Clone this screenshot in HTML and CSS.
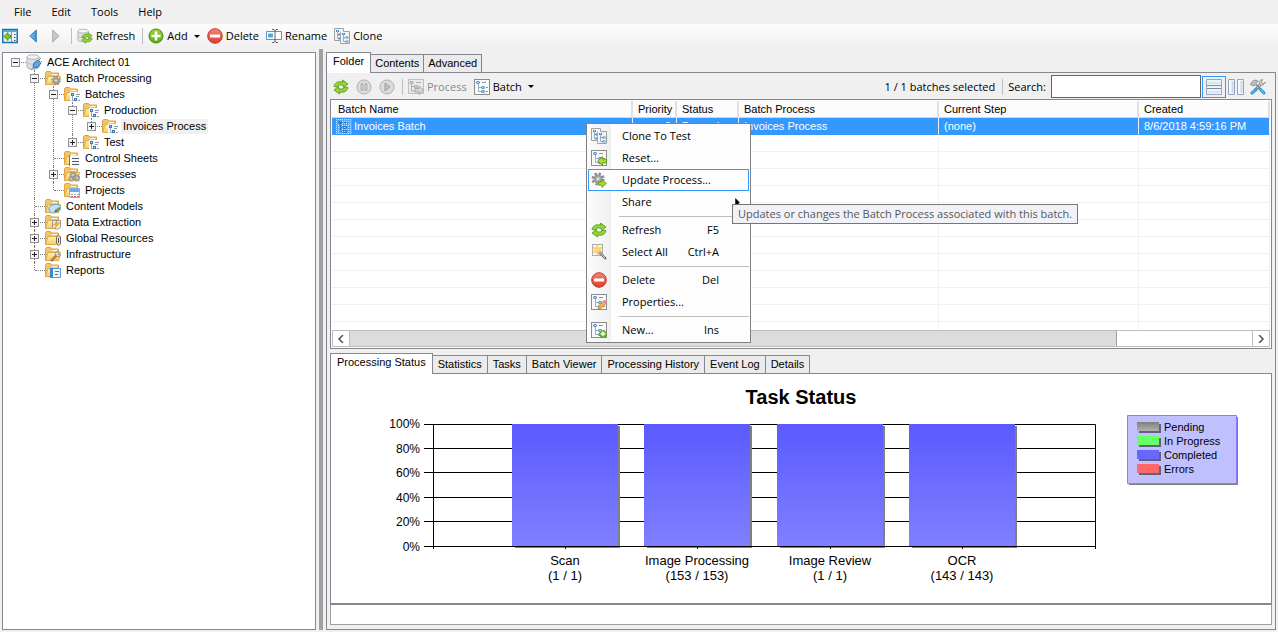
FILE: index.html
```html
<!DOCTYPE html>
<html lang="en">
<head>
<meta charset="utf-8">
<title>ACE Architect</title>
<link rel="stylesheet" href="styles.css">
</head>
<body>
<svg class="defs" aria-hidden="true">
  <defs>
    <linearGradient id="gFolder" x1="0" y1="0" x2="0" y2="1"><stop offset="0" stop-color="#fff0b0"/><stop offset="1" stop-color="#f8cc60"/></linearGradient>
    <linearGradient id="gBlue" x1="0" y1="0" x2="1" y2="0"><stop offset="0" stop-color="#8cc8f4"/><stop offset="1" stop-color="#3c8cd0"/></linearGradient>
    <linearGradient id="gRed" x1="0" y1="0" x2="0" y2="1"><stop offset="0" stop-color="#f08878"/><stop offset="1" stop-color="#dc3c2c"/></linearGradient>
    <linearGradient id="gGreen" x1="0" y1="0" x2="0" y2="1"><stop offset="0" stop-color="#9cd838"/><stop offset="1" stop-color="#5aa80c"/></linearGradient>
    <linearGradient id="gBar" x1="0" y1="0" x2="0" y2="1"><stop offset="0" stop-color="#5a5aff"/><stop offset="1" stop-color="#8080ff"/></linearGradient>
    <linearGradient id="gPend" x1="0" y1="0" x2="0" y2="1"><stop offset="0" stop-color="#808080"/><stop offset="1" stop-color="#b0b0b0"/></linearGradient>
  </defs>
  <symbol id="nodes" viewBox="0 0 16 16">
    <path d="M4.500 5v8M4.500 8.500h3M4.500 12.500h3" fill="none" stroke="#9cb0c4"/>
    <path d="M8 3.500h4M12 8.500h2M12 12.500h2" stroke="#8a949c"/>
    <g fill="#a8d8f8" stroke="#3c78ac"><rect x="2.500" y="2.500" width="3" height="2" rx="1"/><rect x="7.500" y="7.500" width="3" height="2" rx="1"/><rect x="7.500" y="11.500" width="3" height="2" rx="1"/></g>
  </symbol>
  <symbol id="batch" viewBox="0 0 16 16">
    <rect x=".5" y=".5" width="15" height="15" fill="#fafafa" stroke="#8c8c8c"/>
    <use href="#nodes" width="16" height="16"/>
  </symbol>
  <symbol id="clone" viewBox="0 0 16 16">
    <path d="M.5.500h9v3h6v12h-9v-3h-6z" fill="#f4f4f4" stroke="#a0a0a0"/>
    <path d="M6.500 3.500v10" stroke="#b4b4b4"/>
    <path d="M3.500 3v7.500h2M3.500 6.500h2M9.500 6v7.500h3M9.500 9.500h3" fill="none" stroke="#8cb0d0"/>
    <g fill="#4c8cc4"><path d="M2 2h3v2H2zM4.500 5.500h2v2h-2zM4.500 9.500h2v2h-2zM8 5h3v2H8zM11.500 8.500h3v2h-3zM11.500 12.500h3v2h-3z"/></g>
    <path d="M3 3h1M9 6h1M12.500 9.500h1M12.500 13.500h1" stroke="#d0ecff"/>
  </symbol>
  <symbol id="folder" viewBox="0 0 16 16">
    <path d="M.5 14.500V2.500l1-1h4l1.500 1.500h6.500v11.500z" fill="#f0c468" stroke="#dca444"/>
    <path d="M7 4.500h5" stroke="#fff6dc"/>
    <path d="M.5 14.500L3 6.500h12.500L13.500 14.500z" fill="url(#gFolder)" stroke="#e0ac48"/>
  </symbol>
  <symbol id="gear" viewBox="0 0 16 16">
    <circle cx="8" cy="8" r="6" fill="none" stroke="#8c8c8c" stroke-width="3" stroke-dasharray="2.700 2"/>
    <circle cx="8" cy="8" r="4" fill="#d0d0d0" stroke="#989898" stroke-width="2.400"/>
    <circle cx="8" cy="8" r="1.800" fill="#fff" stroke="#888" stroke-width=".8"/>
  </symbol>
  <symbol id="refresh" viewBox="0 0 16 16">
    <g fill="#94d438" stroke="#4c9410" stroke-width=".8" stroke-linejoin="round">
      <path d="M1 7.500C1.500 4 5 2 9.500 3V1l5.500 4-4.500 3.500V6.500C7.500 5.500 5 6 4.200 8z"/>
      <path d="M15 8.500c-.5 3.500-4 5.500-8.500 4.500v2L1 11l4.500-3.500v2c3 1 5.500.5 6.300-1.500z"/>
    </g>
  </symbol>
  <symbol id="db" viewBox="0 0 16 16">
    <path d="M1 3v10c0 3 12 3 12 0V3" fill="#dce0e4" stroke="#acb0b4"/>
    <ellipse cx="7" cy="3" rx="6" ry="2.200" fill="#f4f4f6" stroke="#b0b4b8"/>
    <path d="M1 8c0 3 12 3 12 0" fill="none" stroke="#c0c4c8"/>
  </symbol>
  <symbol id="delete" viewBox="0 0 16 16">
    <circle cx="8" cy="8" r="7.300" fill="url(#gRed)" stroke="#c83828"/>
    <rect x="3" y="6.500" width="10" height="3" rx=".5" fill="#fff"/>
  </symbol>
  <symbol id="add" viewBox="0 0 16 16">
    <circle cx="8" cy="8" r="7" fill="url(#gGreen)" stroke="#4a8a10"/>
    <path d="M8 3.500v9M3.500 8h9" stroke="#fff" stroke-width="2.600"/>
  </symbol>
  <symbol id="arrowR" viewBox="0 0 16 16"><path d="M1 5h6V1l8 7-8 7v-4H1z" fill="#a8dc28" stroke="#5c9410" stroke-width="1.400"/></symbol>
  <symbol id="arrowL" viewBox="0 0 16 16"><path d="M15 5H9V1L1 8l8 7v-4h6z" fill="#a8dc28" stroke="#5c9410" stroke-width="1.400"/></symbol>
  <symbol id="f-batch" viewBox="0 0 16 16"><use href="#folder" width="16" height="16"/><path d="M6 6h10v10H6z" fill="#f6f8fa"/><path d="M8.500 8v6.500h4" fill="none" stroke="#90a8c0"/><path d="M12 8.500h4M14 14.500h2M12 10.500h3" stroke="#909aa4"/><g fill="#c0e4ff" stroke="#3c78ac"><rect x="7.500" y="7.500" width="2" height="2"/><rect x="10.500" y="12.500" width="2" height="2"/></g></symbol>
  <symbol id="f-gear" viewBox="0 0 16 16"><use href="#folder" width="16" height="16"/><use href="#gear" x="6" y="5" width="10" height="11"/></symbol>
  <symbol id="f-sheet" viewBox="0 0 16 16"><use href="#folder" width="16" height="16"/><path d="M6 5.500h10V16H6z" fill="#f8f8ff"/><path d="M5.500 5v11" stroke="#4878d0"/><path d="M8 8.500h7M8 11.500h7M8 14.500h7" stroke="#505868"/></symbol>
  <symbol id="f-proc" viewBox="0 0 16 16"><use href="#folder" width="16" height="16"/><use href="#gear" x="5" y="5" width="8" height="8"/><use href="#gear" x="9" y="8" width="8" height="8"/><use href="#gear" x="4" y="10" width="6" height="6"/></symbol>
  <symbol id="f-proj" viewBox="0 0 16 16"><use href="#folder" width="16" height="16"/><path d="M5.500 6.500h10v9h-10z" fill="#f4f8ff" stroke="#88b0dc"/><path d="M6 7h9v3H6z" fill="#6ca8e8"/><path d="M7 12.500h8" stroke="#90a8c0" stroke-dasharray="2 1"/><path d="M7 14.500h8" stroke="#e06050" stroke-dasharray="2 1"/></symbol>
  <symbol id="f-model" viewBox="0 0 16 16"><use href="#folder" width="16" height="16"/><path d="M4 10c0-4 12-5 12-1 0 3-3 6-8 6-3 0-4-2-4-5z" fill="#bce4f4" stroke="#60a8c8"/><path d="M9 14l2-3 2 1-1 2z" fill="#e03828"/><path d="M12 10l3-1v3l-2 1z" fill="#48b048"/></symbol>
  <symbol id="f-data" viewBox="0 0 16 16"><use href="#folder" width="16" height="16"/><path d="M7.500 6.500h8v7l-4 2-4-2z" fill="#f0f0f0" stroke="#989898"/><path d="M12.500 6l-4 5h3l-2 4 5-6h-3z" fill="#ffc020" stroke="#d08808" stroke-width=".6"/></symbol>
  <symbol id="f-res" viewBox="0 0 16 16"><use href="#folder" width="16" height="16"/><path d="M11.500 13V8c0-3 4-3 4 0v5c0 3-3.500 3-3.500 0" fill="#e8e8e8" stroke="#686868"/><path d="M13.500 8v5" stroke="#505050"/></symbol>
  <symbol id="f-infra" viewBox="0 0 16 16"><use href="#folder" width="16" height="16"/><path d="M6 15l6-6" stroke="#b87c48" stroke-width="2.600"/><path d="M14 5.500c-3-.5-4.500 2-3 4s4.500 1.500 5-.5l-2.500-.5z" fill="#d8d8d8" stroke="#909090"/></symbol>
  <symbol id="f-report" viewBox="0 0 16 16"><use href="#folder" width="16" height="16"/><path d="M6.500 6.500h9v9h-9z" fill="#eaf4ff" stroke="#5c9cd8"/><path d="M5 6v10h3V6z" fill="#3c88d8"/><path d="M10 9.500h4M10 12.500h3" stroke="#5078a0"/></symbol>
  <symbol id="root" viewBox="0 0 16 16"><use href="#db" width="16" height="16"/><path d="M7 13l1-4 4-3 3 3-3 4-4 1z" fill="#5ca8e8" stroke="#2c70b8"/><path d="M12 7l3-3M14 9l2-2M7 14l-2 2" stroke="#808890"/></symbol>
  <symbol id="dbrefresh" viewBox="0 0 16 16"><use href="#db" width="14" height="15"/><use href="#refresh" x="4" y="4" width="12" height="12"/></symbol>
  <symbol id="collapse" viewBox="0 0 16 16"><rect x=".750" y="1.500" width="14.500" height="13" fill="#e8f4fc" stroke="#1874b0" stroke-width="1.500"/><path d="M1 3h14" stroke="#58a8d8" stroke-width="2"/><path d="M9.500 4v10" stroke="#58a0c8"/><path d="M12 6.500h1.500M12 9.500h1.500M12 12.500h1.500" stroke="#456"/><path d="M8.500 7H6V4.500L1.800 8.500 6 12.500V10h2.500z" fill="#88c828" stroke="#3f8608" stroke-width=".8"/></symbol>
  <symbol id="back" viewBox="0 0 8 14"><path d="M7.300 1v12L.8 7z" fill="url(#gBlue)" stroke="#3c80bc"/></symbol>
  <symbol id="fwd" viewBox="0 0 8 14"><path d="M.7 1v12L7.200 7z" fill="#c8c8c8" stroke="#acacac"/></symbol>
  <symbol id="rename" viewBox="0 0 16 16"><path d="M.5 3.500h15v8H.5z" fill="#fff" stroke="#4c9cd0"/><path d="M2 5.500h5v4H2z" fill="#58a8dc"/><path d="M9 2v12M6 1.500h2l1 1 1-1h2M6 14.500h2l1-1 1 1h2" fill="none" stroke="#586470" stroke-width="1"/></symbol>
  <symbol id="pause" viewBox="0 0 16 16"><circle cx="8" cy="8" r="7" fill="#dcdcdc" stroke="#b0b0b0"/><path d="M6 4.500v7M10 4.500v7" stroke="#a0a0a0" stroke-width="2.600"/><path d="M6 5.500v5M10 5.500v5" stroke="#e4e4e4"/></symbol>
  <symbol id="play" viewBox="0 0 16 16"><circle cx="8" cy="8" r="7" fill="#dcdcdc" stroke="#b0b0b0"/><path d="M6 4l5 4-5 4z" fill="#c0c0c0" stroke="#a0a0a0"/></symbol>
  <symbol id="process" viewBox="0 0 16 16"><g opacity=".75"><rect x=".5" y=".5" width="15" height="14" fill="#e8e8e8" stroke="#b0b0b0"/><path d="M3.500 3v9h3M3.500 7.500h3M8 3.500h5" fill="none" stroke="#989898"/><path d="M2 2.500h3v2H2zM6.500 6.500h3v2h-3z" fill="#d0d0d0" stroke="#989898"/><path d="M7 9.500h4V7l5 4.500-5 4V13H7z" fill="#ccc" stroke="#909090"/></g></symbol>
  <symbol id="rowsel" viewBox="0 0 16 16"><rect width="16" height="16" fill="#5ca8ee"/><path d="M.5 0v16M2.500 0v16M4.500 0v16M6.500 0v16M8.500 0v16M10.500 0v16M12.500 0v16M14.500 0v16" stroke="#b8dcff" stroke-dasharray="1 1"/><path d="M4.500 3v9.500h3M4.500 8.500h3M8 3.500h4M2.500 2.500h3v2h-3zM7.500 7.500h3v2h-3zM7.500 11.500h3v2h-3z" fill="none" stroke="#2868a8" stroke-dasharray="2 1"/></symbol>
  <symbol id="hsplit" viewBox="0 0 16 16"><path d="M.5.500h15v15H.5z" fill="#eef3f8" stroke="#94a8c0"/><path d="M1 6.500h14M1 9.500h14" stroke="#7890b0"/><path d="M2 4h12M2 13h12" stroke="#dce4ee" stroke-width="2"/></symbol>
  <symbol id="vsplit" viewBox="0 0 16 16"><path d="M.5.500h6v15h-6zM9.500.500h6v15h-6z" fill="#f6f8fb" stroke="#94a4bc"/><path d="M4.500 2v12M13.500 2v12" stroke="#ccd6e2" stroke-width="2"/></symbol>
  <symbol id="tools" viewBox="0 0 16 16"><path d="M11.500 4.500L5 11" stroke="#8c8c8c" stroke-width="3"/><path d="M11.500 4.500L5 11" stroke="#e0e0e0"/><path d="M15.500 3l-2.500 2-2-2L13 .8c-3-.5-4.500 2-3.500 4.200s4 2 6-2z" fill="#d0d0d0" stroke="#8c8c8c" stroke-width=".8"/><path d="M.5 5.500c1.500-4 4.500-5.500 7.500-3.500L4 7z" fill="#c0c0c0" stroke="#808080" stroke-width=".8"/><path d="M6 5.500l4 4" stroke="#909090" stroke-width="2"/><path d="M10 10l4 4M6 10.500L2 14" stroke="#3494d0" stroke-width="3" stroke-linecap="round"/><path d="M10.500 10.500l3 3M5 11l-2.500 2.500" stroke="#8cd0f8" stroke-linecap="round"/></symbol>
  <symbol id="reset" viewBox="0 0 16 16"><use href="#batch" width="16" height="16"/><use href="#arrowL" x="6" y="6" width="10" height="10"/></symbol>
  <symbol id="update" viewBox="0 0 16 16"><use href="#gear" x="0" y="0" width="14" height="14"/><use href="#arrowR" x="7" y="7" width="9" height="9"/></symbol>
  <symbol id="props" viewBox="0 0 16 16"><use href="#batch" width="16" height="16"/><path d="M7 15l1-3.500L13 6.500l2.500 2.500-5 5z" fill="#f8b050" stroke="#b87828" stroke-width=".8"/><path d="M13 6.500l2.500 2.500" stroke="#e080b0" stroke-width="2"/></symbol>
  <symbol id="new" viewBox="0 0 16 16"><use href="#batch" width="16" height="16"/><use href="#add" x="8" y="8" width="8" height="8"/></symbol>
  <symbol id="wand" viewBox="0 0 16 16"><path d="M1.500.500h10v11h-10z" fill="none" stroke="#606060" stroke-dasharray="1 1"/><path d="M6.500 1l1.200 3L11 3.500 9 6l2 2.500-3.300-.3L6.500 11 5.200 8 2 8.500 4 6 2 3.500l3.200.3z" fill="#ffd868" stroke="#f0b840" stroke-width=".5"/><path d="M8 8l7 7" stroke="#707070" stroke-width="2.400"/><path d="M7 7l7 7" stroke="#d0d0d0"/></symbol>
</svg>

<nav class="menubar">
  <button>File</button><button>Edit</button><button>Tools</button><button>Help</button>
</nav>

<div class="toolbar main-tools">
  <button aria-label="Hide tree"><svg class="icon"><use href="#collapse"/></svg></button>
  <button class="nav" aria-label="Back"><svg class="tri"><use href="#back"/></svg></button>
  <button class="nav" aria-label="Forward"><svg class="tri"><use href="#fwd"/></svg></button>
  <span class="sep"></span>
  <button><svg class="icon"><use href="#dbrefresh"/></svg>Refresh</button>
  <span class="sep"></span>
  <button><svg class="icon"><use href="#add"/></svg>Add<span class="caret"></span></button>
  <button><svg class="icon"><use href="#delete"/></svg>Delete</button>
  <button><svg class="icon"><use href="#rename"/></svg>Rename</button>
  <button><svg class="icon"><use href="#clone"/></svg>Clone</button>
</div>

<main class="workspace">
  <aside class="tree-pane">
    <ul class="tree">
      <li><div class="node"><button class="exp" aria-label="Collapse"></button><svg class="icon"><use href="#root"/></svg><span>ACE Architect 01</span></div>
        <ul>
          <li><div class="node"><button class="exp" aria-label="Collapse"></button><svg class="icon"><use href="#f-gear"/></svg><span>Batch Processing</span></div>
            <ul>
              <li><div class="node"><button class="exp" aria-label="Collapse"></button><svg class="icon"><use href="#f-batch"/></svg><span>Batches</span></div>
                <ul>
                  <li><div class="node"><button class="exp" aria-label="Collapse"></button><svg class="icon"><use href="#f-batch"/></svg><span>Production</span></div>
                    <ul>
                      <li><div class="node"><button class="exp plus" aria-label="Expand"></button><svg class="icon"><use href="#f-batch"/></svg><span class="current">Invoices Process</span></div></li>
                    </ul>
                  </li>
                  <li><div class="node"><button class="exp plus" aria-label="Expand"></button><svg class="icon"><use href="#f-batch"/></svg><span>Test</span></div></li>
                </ul>
              </li>
              <li><div class="node"><svg class="icon"><use href="#f-sheet"/></svg><span>Control Sheets</span></div></li>
              <li><div class="node"><button class="exp plus" aria-label="Expand"></button><svg class="icon"><use href="#f-proc"/></svg><span>Processes</span></div></li>
              <li><div class="node"><svg class="icon"><use href="#f-proj"/></svg><span>Projects</span></div></li>
            </ul>
          </li>
          <li><div class="node"><svg class="icon"><use href="#f-model"/></svg><span>Content Models</span></div></li>
          <li><div class="node"><button class="exp plus" aria-label="Expand"></button><svg class="icon"><use href="#f-data"/></svg><span>Data Extraction</span></div></li>
          <li><div class="node"><button class="exp plus" aria-label="Expand"></button><svg class="icon"><use href="#f-res"/></svg><span>Global Resources</span></div></li>
          <li><div class="node"><button class="exp plus" aria-label="Expand"></button><svg class="icon"><use href="#f-infra"/></svg><span>Infrastructure</span></div></li>
          <li><div class="node"><svg class="icon"><use href="#f-report"/></svg><span>Reports</span></div></li>
        </ul>
      </li>
    </ul>
  </aside>
  <div class="splitter"></div>

  <section class="content">
    <div class="tabs" role="tablist">
      <button role="tab" class="tab active" aria-selected="true">Folder</button><button role="tab" class="tab">Contents</button><button role="tab" class="tab">Advanced</button>
    </div>
    <div class="page">
      <div class="toolbar batch-tools">
        <button aria-label="Refresh"><svg class="icon"><use href="#refresh"/></svg></button>
        <button aria-label="Pause" disabled><svg class="icon"><use href="#pause"/></svg></button>
        <button aria-label="Resume" disabled><svg class="icon"><use href="#play"/></svg></button>
        <span class="sep"></span>
        <button disabled><svg class="icon"><use href="#process"/></svg>Process</button>
        <button><svg class="icon"><use href="#batch"/></svg>Batch<span class="caret"></span></button>
        <span class="count">1 / 1 batches selected</span>
        <span class="sep"></span>
        <label for="search">Search:</label>
        <input id="search" type="text">
        <button class="view on" aria-label="Split horizontally"><svg class="icon"><use href="#hsplit"/></svg></button>
        <button class="view" aria-label="Split vertically"><svg class="icon"><use href="#vsplit"/></svg></button>
        <button class="view" aria-label="Settings"><svg class="icon"><use href="#tools"/></svg></button>
      </div>

      <div class="list">
        <div class="rows">
          <table>
            <colgroup><col class="c-name"><col class="c-prio"><col class="c-stat"><col class="c-proc"><col class="c-step"><col></colgroup>
            <thead><tr><th>Batch Name</th><th class="num">Priority</th><th>Status</th><th>Batch Process</th><th>Current Step</th><th>Created</th></tr></thead>
            <tbody>
              <tr class="sel"><td><span class="name"><svg class="icon"><use href="#rowsel"/></svg>Invoices Batch</span></td><td class="num">3</td><td>Paused</td><td>Invoices Process</td><td>(none)</td><td>8/6/2018 4:59:16 PM</td></tr>
              <tr><td></td><td></td><td></td><td></td><td></td><td></td></tr>
              <tr><td></td><td></td><td></td><td></td><td></td><td></td></tr>
              <tr><td></td><td></td><td></td><td></td><td></td><td></td></tr>
              <tr><td></td><td></td><td></td><td></td><td></td><td></td></tr>
              <tr><td></td><td></td><td></td><td></td><td></td><td></td></tr>
              <tr><td></td><td></td><td></td><td></td><td></td><td></td></tr>
              <tr><td></td><td></td><td></td><td></td><td></td><td></td></tr>
              <tr><td></td><td></td><td></td><td></td><td></td><td></td></tr>
              <tr><td></td><td></td><td></td><td></td><td></td><td></td></tr>
              <tr><td></td><td></td><td></td><td></td><td></td><td></td></tr>
              <tr><td></td><td></td><td></td><td></td><td></td><td></td></tr>
              <tr><td></td><td></td><td></td><td></td><td></td><td></td></tr>
            </tbody>
          </table>
        </div>
        <div class="scroll">
          <button aria-label="Scroll left"><svg viewBox="0 0 8 8"><path d="M6 0L2 4l4 4" fill="none" stroke="#505050" stroke-width="1.500"/></svg></button>
          <div class="track"><div class="thumb"></div></div>
          <button aria-label="Scroll right"><svg viewBox="0 0 8 8"><path d="M2 0l4 4-4 4" fill="none" stroke="#505050" stroke-width="1.500"/></svg></button>
        </div>
      </div>

      <div class="tabs lower" role="tablist">
        <button role="tab" class="tab active" aria-selected="true">Processing Status</button><button role="tab" class="tab">Statistics</button><button role="tab" class="tab">Tasks</button><button role="tab" class="tab">Batch Viewer</button><button role="tab" class="tab">Processing History</button><button role="tab" class="tab">Event Log</button><button role="tab" class="tab">Details</button>
      </div>
      <div class="chart-pane">
        <svg class="chart" viewBox="331 374 940 229" role="img" aria-label="Task Status">
          <text class="title" x="801" y="404">Task Status</text>
          <path class="axis" d="M424 424.500h671.500v122M424 448.500h672M424 472.500h672M424 497.500h672M424 521.500h672"/>
          <g class="shade"><path d="M515 426h105v122H515z"/><path d="M647 426h105v122H647z"/><path d="M780 426h105v122H780z"/><path d="M912 426h105v122H912z"/></g>
          <g fill="url(#gBar)"><path d="M512 424h106v123H512z"/><path d="M644 424h106v123H644z"/><path d="M777 424h106v123H777z"/><path d="M909 424h106v123H909z"/></g>
          <path class="axis" d="M433.500 424v125M424 546.500h672M565.500 546v3M697.500 546v3M830.500 546v3M962.500 546v3M1095.500 546v3"/>
          <g class="ticks"><text x="420" y="428">100%</text><text x="420" y="453">80%</text><text x="420" y="477">60%</text><text x="420" y="502">40%</text><text x="420" y="526">20%</text><text x="420" y="551">0%</text></g>
          <g class="cats"><text x="565" y="565">Scan</text><text x="565" y="580">(1 / 1)</text><text x="697" y="565">Image Processing</text><text x="697" y="580">(153 / 153)</text><text x="830" y="565">Image Review</text><text x="830" y="580">(1 / 1)</text><text x="962" y="565">OCR</text><text x="962" y="580">(143 / 143)</text></g>
          <path class="shade" d="M1129 417h109v68h-109z"/>
          <path d="M1127.500 415.500h109v68h-109z" fill="#c0c0ff" stroke="#8080ff"/>
          <g fill="#606080"><path d="M1139 424h22v9h-22zM1139 438h22v9h-22zM1139 452h22v9h-22zM1139 466h22v9h-22z"/></g>
          <path d="M1137 422h22v9h-22z" fill="url(#gPend)"/><path d="M1137 436h22v9h-22z" fill="#66ff66"/><path d="M1137 450h22v9h-22z" fill="#6868ff"/><path d="M1137 464h22v9h-22z" fill="#ff6868"/>
          <g class="legend"><text x="1164" y="431">Pending</text><text x="1164" y="445">In Progress</text><text x="1164" y="459">Completed</text><text x="1164" y="473">Errors</text></g>
        </svg>
      </div>
      <div class="message"></div>
    </div>
  </section>
</main>

<div class="context" role="menu">
  <button role="menuitem"><svg class="icon"><use href="#clone"/></svg><span>Clone To Test</span></button>
  <button role="menuitem"><svg class="icon"><use href="#reset"/></svg><span>Reset...</span></button>
  <button role="menuitem" class="hot"><svg class="icon"><use href="#update"/></svg><span>Update Process...</span></button>
  <button role="menuitem" class="sub"><i class="icon"></i><span>Share</span><svg class="more" viewBox="0 0 5 10"><path d="M0 0l5 5-5 5z"/></svg></button>
  <hr>
  <button role="menuitem"><svg class="icon"><use href="#refresh"/></svg><span>Refresh</span><kbd>F5</kbd></button>
  <button role="menuitem"><svg class="icon"><use href="#wand"/></svg><span>Select All</span><kbd>Ctrl+A</kbd></button>
  <hr>
  <button role="menuitem"><svg class="icon"><use href="#delete"/></svg><span>Delete</span><kbd>Del</kbd></button>
  <button role="menuitem"><svg class="icon"><use href="#props"/></svg><span>Properties...</span></button>
  <hr>
  <button role="menuitem"><svg class="icon"><use href="#new"/></svg><span>New...</span><kbd>Ins</kbd></button>
</div>
<div class="tip" role="tooltip">Updates or changes the Batch Process associated with this batch.</div>
</body>
</html>
```
FILE: styles.css
```css
* { box-sizing: border-box; }
body {
  margin: 0;
  height: 100vh;
  display: flex;
  flex-direction: column;
  overflow: hidden;
  background: #f0f0f0;
  color: #000;
  font: 11px/16px "Liberation Sans", Arial, sans-serif;
}
button { font: inherit; color: inherit; background: none; border: 0; padding: 0; margin: 0; white-space: nowrap; }
.defs { position: absolute; width: 0; height: 0; }
.icon { width: 16px; height: 16px; flex: none; }

.menubar, .toolbar, .context, .tip { font-family: "Open Sans", "Noto Sans", sans-serif; font-size: 11px; }
.menubar { display: flex; gap: 20px; height: 24px; padding-left: 14px; flex: none; }

.toolbar { display: flex; align-items: center; flex: none; }
.toolbar button { display: flex; align-items: center; gap: 3px; height: 22px; }
.toolbar button:disabled { color: #888; }
.toolbar .sep { width: 1px; height: 16px; margin-right: -2px; background: #bdbdbd; }
.main-tools { height: 24px; padding: 0 2px; gap: 7px; background: linear-gradient(#fdfdfd, #f0f0f0); }
.nav { padding: 0 4px; }
.tri { width: 8px; height: 14px; }
.caret { width: 0; height: 0; margin-left: 3px; border: 3px solid transparent; border-top-color: #000; border-bottom: 0; }

.workspace { flex: 1; display: flex; min-height: 0; padding: 1px 0 2px; }
.tree-pane { flex: 0 0 314px; margin: 3px 3px 0 2px; background: #fff; border: 1px solid #828790; padding: 1px 3px; }
.splitter { flex: 0 0 4px; background: #a0a0a0; margin-right: 3px; }

.tree, .tree ul { list-style: none; margin: 0; padding: 0; }
.tree ul { padding-left: 19px; }
.tree li { position: relative; }
.tree li li::before { content: ""; position: absolute; left: 9px; top: 0; bottom: 0; border-left: 1px dotted #808080; }
.tree li li:last-child::before { bottom: auto; height: 8px; }
.node { position: relative; display: flex; align-items: center; height: 16px; padding-left: 20px; }
.node::before { content: ""; position: absolute; left: 10px; width: 10px; top: 8px; border-top: 1px dotted #808080; }
.node span { padding: 0 2px; margin-left: 3px; white-space: nowrap; line-height: 15px; }
.node .current { background: #f0f0f0; }
.tree .exp { position: absolute; left: 5px; top: 4px; width: 9px; height: 9px; border: 1px solid #909090; background: linear-gradient(#222, #222) center/5px 1px no-repeat #f4f4f4; }
.tree .plus { background: linear-gradient(#222, #222) center/5px 1px no-repeat, linear-gradient(#222, #222) center/1px 5px no-repeat #f4f4f4; }

.content { flex: 1; min-width: 0; display: flex; flex-direction: column; padding: 3px 2px 0 0; }
.tabs { display: flex; align-items: flex-end; flex: none; height: 20px; }
.tab { position: relative; height: 18px; margin-left: -1px; padding: 0 4px; background: #ebebeb; border: 1px solid #828790; border-bottom: 0; line-height: 17px; }
.tab.active { z-index: 1; height: 21px; margin: 0 0 -1px; padding: 0 6px 3px; background: #fff; }
.page { flex: 1; min-height: 0; display: flex; flex-direction: column; border: 1px solid #828790; padding: 1px 3px 4px; }

.batch-tools { height: 25px; padding: 0 2px 0 3px; gap: 7px; }
.batch-tools .count { margin-left: auto; }
.batch-tools label { margin-right: -2px; }
.batch-tools input { width: 150px; height: 23px; border: 1px solid #646464; padding: 0 3px; font: inherit; background: #fff; margin-right: -6px; }
.batch-tools .view { padding: 0 3px; width: 24px; height: 22px; border: 1px solid transparent; margin-right: -9px; }
.batch-tools .view:last-child { margin-right: 0; }
.batch-tools .on { border-color: #3399ff; }

.list { flex: none; border: 1px solid #828790; padding: 1px; background: #fff; }
.rows { height: 229px; overflow: hidden; }
table { width: 100%; table-layout: fixed; border-collapse: separate; border-spacing: 0; }
.c-name { width: 301px; }
.c-prio { width: 44px; }
.c-stat { width: 62px; }
.c-proc, .c-step { width: 200px; }
th, td { height: 17px; padding: 1px 5px 0; text-align: left; font-weight: normal; line-height: 15px; white-space: nowrap; overflow: hidden; border-right: 1px solid #f0f0f0; border-bottom: 1px solid #f0f0f0; }
th { background: #fcfcfc; border-right: 2px solid #e0e0e0; border-bottom-color: #d5d5d5; }
th:first-child { padding-left: 6px; }
.num { text-align: right; }
.sel td { background: #3399ff; color: #fff; border-bottom-color: #3399ff; }
.sel td:first-child { padding-left: 4px; }
.name { display: flex; gap: 2px; height: 15px; }
.scroll { display: flex; height: 17px; border: 1px solid #bdbdbd; }
.scroll button { width: 16px; display: flex; align-items: center; justify-content: center; }
.scroll button svg { width: 8px; height: 8px; }
.track { flex: 1; display: flex; border: solid #bdbdbd; border-width: 0 1px; }
.thumb { width: 85%; background: #dcdcdc; border-right: 1px solid #a0a0a0; }

.lower { margin-top: 4px; }
.lower .tab:not(.active) { padding: 0 5px; }
.chart-pane { flex: 1; min-height: 0; background: #fff; border: 1px solid #828790; }
.chart { display: block; width: 100%; height: 100%; }
.message { flex: none; height: 21px; background: #fff; border: 1px solid #a0a0a0; border-top-color: #828790; }
.axis { fill: none; stroke: #000; }
.shade { fill: #808080; }
.title { font-size: 20px; font-weight: bold; text-anchor: middle; }
.ticks { font-size: 12px; text-anchor: end; }
.cats { font-size: 13px; text-anchor: middle; }
.legend { font-size: 11px; }

.context { position: absolute; left: 586px; top: 123px; width: 165px; z-index: 3; padding: 1px; border: 1px solid #808080; background: linear-gradient(90deg, #fcfcfc, #f0f0f0) 0 0/24px 100% no-repeat #fdfdfd; }
.context button { display: flex; align-items: center; width: 100%; height: 22px; padding: 0 29px 0 2px; border: 1px solid transparent; text-align: left; }
.context .hot { border-color: #3399ff; background: #fdfdfd; }
.context span { margin-left: 15px; }
.context kbd { margin-left: auto; font: inherit; }
.context hr { height: 1px; margin: 3px 0 2px 31px; border: 0; background: #bdbdbd; }
.context .sub { padding-right: 8px; }
.more { width: 5px; height: 9px; margin-left: auto; }
.tip { position: absolute; left: 732px; top: 204px; z-index: 4; height: 20px; padding: 0 5px; border: 1px solid #767676; background: #f1f2f7; color: #575757; line-height: 18px; white-space: nowrap; }
```
